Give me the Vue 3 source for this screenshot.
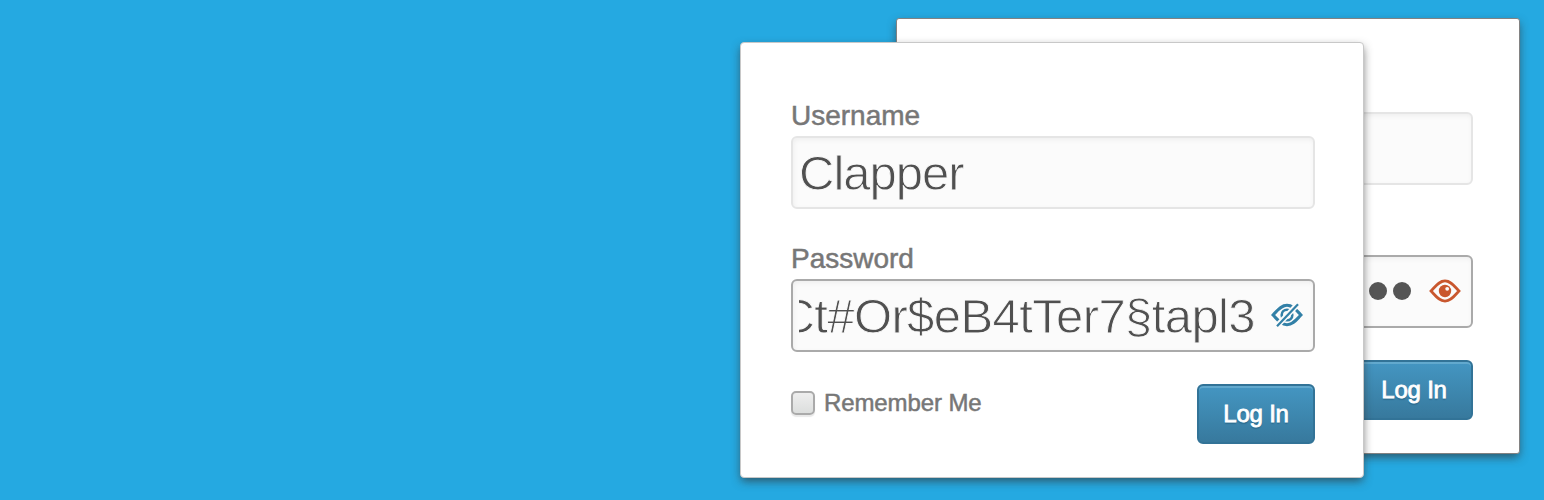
<script setup>
const cards = [
  { name: 'back', visible: false },
  { name: 'front', visible: true },
]
</script>

<template>
  <main class="banner">
    <form v-for="card in cards" :key="card.name" class="card" :class="card.name" @submit.prevent>
      <div class="content">
        <label class="label">Username</label>
        <div class="field"><span v-if="card.visible" class="value name">Clapper</span></div>
        <label class="label second">Password</label>
        <div class="field active">
          <div class="clip">
            <span v-if="card.visible" class="value secret">Ct#Or$eB4tTer7§tapl3</span>
            <span v-else class="dots"><i></i><i></i></span>
          </div>
          <svg v-if="card.visible" class="eye hidden-eye" viewBox="0 0 32 26">
            <path d="M2 13C6.5 8.5 10 3.2 16 3.2S25.500 8.500 30 13C25.500 17.500 22 22.800 16 22.800S6.500 17.500 2 13Z" fill="none" stroke="currentColor" stroke-width="3" />
            <circle cx="16" cy="13" r="5.300" fill="none" stroke="currentColor" stroke-width="2.600" />
            <path d="M4.500 25.500L28.300 .500" stroke="#fbfbfb" stroke-width="5.600" />
            <path d="M6 24.300L27 2.200" stroke="currentColor" stroke-width="2.200" />
          </svg>
          <svg v-else class="eye" viewBox="0 0 32 26">
            <path d="M2 13C6.5 8.5 10 2.8 16 2.8S25.500 8.500 30 13C25.500 17.500 22 23.200 16 23.200S6.500 17.500 2 13Z" fill="none" stroke="currentColor" stroke-width="2.700" />
            <circle cx="16" cy="13" r="6.200" fill="currentColor" />
            <circle cx="18.200" cy="10.800" r="1.900" fill="#fbfbfb" />
          </svg>
        </div>
        <div class="actions">
          <label class="remember"><span class="box"></span><span>Remember Me</span></label>
          <button class="login">Log In</button>
        </div>
      </div>
    </form>
  </main>
</template>

<style>
body { margin: 0; }
</style>

<style scoped>
.banner {
  position: relative;
  width: 1544px;
  height: 500px;
  overflow: hidden;
  background: #25a9e1;
  font-family: "Liberation Sans", Arial, sans-serif;
}
.card {
  position: absolute;
  box-sizing: border-box;
  width: 624px;
  height: 436px;
  padding: 53px 48px 0 50px;
  border: 1px solid #c8c8c8;
  border-radius: 4px;
  background: #fff;
  box-shadow: 0 4px 10px -1px rgba(50, 50, 50, 0.7);
}
.back { left: 896px; top: 18px; padding-left: 52px; padding-right: 46px; border-color: #828282; border-radius: 3px; }
.front { left: 740px; top: 42px; }
.content { width: 524px; }
.label {
  display: block;
  height: 40px;
  color: #777;
  font-size: 28px;
  line-height: 39px;
  -webkit-text-stroke: 0.5px #777;
}
.second { margin-top: 30px; }
.field {
  box-sizing: border-box;
  display: flex;
  align-items: center;
  justify-content: space-between;
  height: 73px;
  padding: 0 10px 1px 6px;
  border: 2px solid #e5e5e5;
  border-radius: 6px;
  background: #fbfbfb;
  box-shadow: inset 1px 2px 5px rgba(0, 0, 0, 0.05);
}
.active { border-color: #aaa; }
.value {
  color: #505050;
  font-size: 49px;
  line-height: 66px;
  padding-top: 2px;
  white-space: nowrap;
  -webkit-text-stroke: 0.9px #fbfbfb;
}
.name { letter-spacing: -1px; }
.clip { display: flex; justify-content: flex-end; width: 457px; overflow: hidden; }
.secret { flex: none; padding-right: 1px; letter-spacing: -0.6px; }
.dots { display: flex; gap: 6px; padding-right: 3px; }
.dots i { width: 18px; height: 18px; border-radius: 50%; background: #555; }
.eye { width: 32px; height: 26px; color: #c9572e; }
.hidden-eye { color: #3280a7; }
.actions { display: flex; justify-content: space-between; margin-top: 32px; }
.remember { display: flex; align-items: center; gap: 9px; height: 38px; color: #777; font-size: 24px; letter-spacing: -0.1px; -webkit-text-stroke: 0.5px #777; }
.box {
  box-sizing: border-box;
  width: 24px;
  height: 24px;
  border: 2px solid #aaa;
  border-radius: 5px;
  background: linear-gradient(#eee, #dcdedd);
  box-shadow: 0 2px 1px #e9e9e9;
}
.login {
  width: 118px;
  height: 60px;
  padding: 0;
  border: 2px solid #327397;
  border-radius: 6px;
  background: linear-gradient(#4496c2, #37799d);
  box-shadow: inset 0 2px 0 #62a9ce;
  color: #fff;
  font: 24px "Liberation Sans", Arial, sans-serif;
  letter-spacing: -0.2px;
  text-shadow: 0 2px 1px rgba(20, 70, 100, 0.35);
  -webkit-text-stroke: 0.8px #fff;
}
</style>
